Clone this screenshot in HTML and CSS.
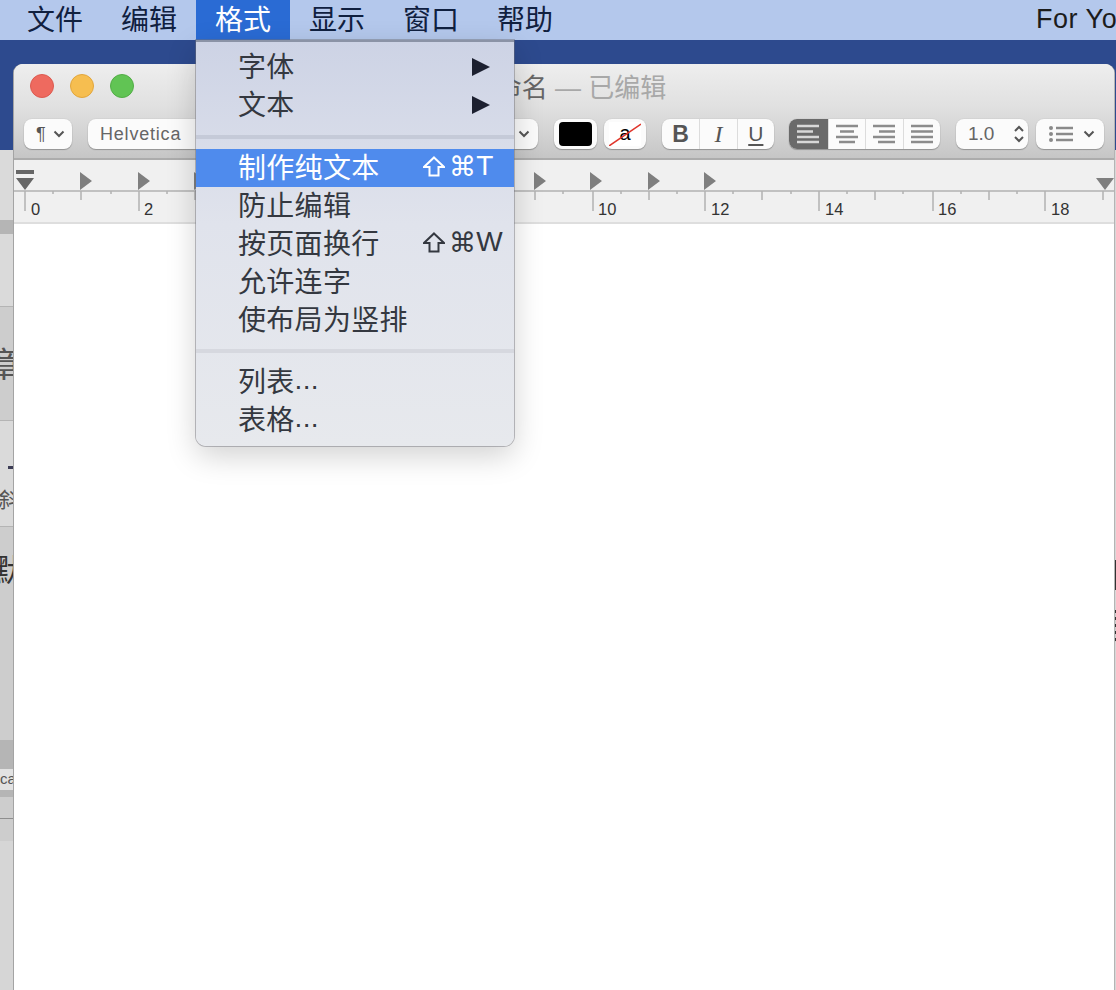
FILE: index.html

```html
<!DOCTYPE html>
<html lang="zh">
<head>
<meta charset="utf-8"/>
<title>未命名 — 已编辑</title>
<link rel="stylesheet" href="styles.css">
</head>
<body>
<div class="menubar">
  <div class="menubar-item">文件</div>
  <div class="menubar-item">编辑</div>
  <div class="menubar-item active">格式</div>
  <div class="menubar-item">显示</div>
  <div class="menubar-item">窗口</div>
  <div class="menubar-item">帮助</div>
  <div class="menubar-right">For You</div>
</div>

<div class="desktop">
  <!-- sliver of the window behind -->
  <div class="back-window">
    <div class="back-row h70 light"></div>
    <div class="back-row h14 dark"></div>
    <div class="back-row h72 light line"></div>
    <div class="back-row h114 mid line"><span class="glyph-zhang">章</span></div>
    <div class="back-row h106 light line"><span class="dot"></span><span class="dash"></span><span class="glyph-xie">斜</span></div>
    <div class="back-row h214 mid"><span class="glyph-mo">默</span></div>
    <div class="back-row h29 dark"></div>
    <div class="back-row h21 pale"><span class="glyph-ca">ca</span></div>
    <div class="back-row h7 dark"></div>
    <div class="back-row h22 mid line-dark"></div>
    <div class="back-row h22 mid"></div>
    <div class="back-row rest light"></div>
  </div>
  <div class="back-edge">
    <div class="edge-gap"></div>
    <div class="edge-dark"></div>
    <div class="edge-dashes"></div>
  </div>

  <div class="window">
    <div class="titlebar">
      <div class="lights">
        <span class="light-btn red"></span>
        <span class="light-btn yellow"></span>
        <span class="light-btn green"></span>
      </div>
      <div class="title">未命名 <span class="edited">— 已编辑</span></div>
    </div>

    <div class="toolbar">
      <div class="pill para">
        <span class="para-mark">¶</span>
        <svg class="chev" width="12" height="8" viewBox="0 0 12 8"><path d="M1.5 1.5 6 6l4.5-4.5"/></svg>
      </div>
      <div class="pill font-pick">
        <span>Helvetica</span>
        <svg class="chev" width="12" height="8" viewBox="0 0 12 8"><path d="M1.5 1.5 6 6l4.5-4.5"/></svg>
      </div>
      <div class="pill well"><span class="swatch"></span></div>
      <div class="pill well well-none">
        <span class="swatch-none">a
          <svg width="32" height="24" viewBox="0 0 32 24"><path d="M0 24 32 2"/></svg>
        </span>
      </div>
      <div class="pill seg bold-group">
        <span class="seg-btn b">B</span>
        <span class="seg-btn i">I</span>
        <span class="seg-btn u">U</span>
      </div>
      <div class="pill seg align-group">
        <span class="seg-btn on">
          <svg width="24" height="20" viewBox="0 0 24 20"><path d="M1 2h22M1 7.5h16M1 13h22M1 18h22"/></svg>
        </span>
        <span class="seg-btn">
          <svg width="24" height="20" viewBox="0 0 24 20"><path d="M1 2h22M5 7.5h14M1 13h22M4 18h16"/></svg>
        </span>
        <span class="seg-btn">
          <svg width="24" height="20" viewBox="0 0 24 20"><path d="M1 2h22M7 7.5h16M1 13h22M6 18h17"/></svg>
        </span>
        <span class="seg-btn">
          <svg width="24" height="20" viewBox="0 0 24 20"><path d="M1 2h22M1 7.5h22M1 13h22M1 18h22"/></svg>
        </span>
      </div>
      <div class="pill spacing">
        <span>1.0</span>
        <svg class="chev" width="12" height="18" viewBox="0 0 12 18"><path d="M2 6l4-4 4 4M2 12l4 4 4-4"/></svg>
      </div>
      <div class="pill list-pick">
        <svg class="list-icon" width="24" height="18" viewBox="0 0 24 18"><path d="M7 3h17M7 9h17M7 15h17"/><circle cx="2" cy="3" r="2"/><circle cx="2" cy="9" r="2"/><circle cx="2" cy="15" r="2"/></svg>
        <svg class="chev" width="12" height="8" viewBox="0 0 12 8"><path d="M1.5 1.5 6 6l4.5-4.5"/></svg>
      </div>
    </div>

    <svg class="ruler" width="1100" height="64" viewBox="14 160 1100 64">
      <path class="rule-line" d="M14 191h1100"/>
      <path class="rule-bottom" d="M14 223h1100"/>
      <path class="rule-tick" d="M25 191v20M139 191v20M593 191v20M705 191v20M819 191v20M933 191v20M1045 191v20
        M81 191v9M195 191v9M535 191v9M649 191v9M762 191v9M875 191v9M989 191v9M1103 191v9
        M53 191v3M111 191v3M167 191v3M563 191v3M621 191v3M677 191v3M733 191v3M791 191v3M847 191v3M903 191v3M961 191v3M1017 191v3"/>
      <path class="rule-mark" d="M80 172l12 9-12 9zM138 172l12 9-12 9zM194 172l12 9-12 9zM534 172l12 9-12 9zM590 172l12 9-12 9zM648 172l12 9-12 9zM704 172l12 9-12 9zM1096 178h18l-9 12z"/>
      <path class="rule-first" d="M16 170h18v4H16zM16 178h18l-9 12z"/>
      <text x="31" y="215">0</text>
      <text x="144" y="215">2</text>
      <text x="598" y="215">10</text>
      <text x="711" y="215">12</text>
      <text x="825" y="215">14</text>
      <text x="938" y="215">16</text>
      <text x="1051" y="215">18</text>
    </svg>

    <div class="doc"></div>
  </div>

  <div class="menu">
    <div class="menu-row">字体<span class="arrow"></span></div>
    <div class="menu-row">文本<span class="arrow"></span></div>
    <div class="menu-sep"></div>
    <div class="menu-row hot">
      <span class="menu-label">制作纯文本</span>
      <svg class="shift" width="22" height="21" viewBox="0 0 22 21"><path d="M11 1.5 21 11H15.5V19.5H6.5V11H1Z"/></svg>
      <span class="cmd">⌘</span><span class="key">T</span>
    </div>
    <div class="menu-row">防止编辑</div>
    <div class="menu-row">
      <span class="menu-label">按页面换行</span>
      <svg class="shift" width="22" height="21" viewBox="0 0 22 21"><path d="M11 1.5 21 11H15.5V19.5H6.5V11H1Z"/></svg>
      <span class="cmd">⌘</span><span class="key">W</span>
    </div>
    <div class="menu-row">允许连字</div>
    <div class="menu-row">使布局为竖排</div>
    <div class="menu-sep low"></div>
    <div class="menu-row">列表<span class="key">...</span></div>
    <div class="menu-row">表格<span class="key">...</span></div>
  </div>
</div>
</body>
</html>
```

FILE: styles.css

```css
* {
    box-sizing: border-box;
}
html, body {
    margin: 0;
    height: 990px;
    overflow: hidden;
}
body {
    width: 1116px;
    background: #2d4a8e;
    font-family: "Liberation Sans", "Noto Sans CJK SC", sans-serif;
}

/* menu bar */
.menubar {
    display: flex;
    height: 40px;
    padding-left: 8px;
    background: #b4c8ec;
    color: #10203f;
    font-size: 28px;
    line-height: 41px;
    white-space: nowrap;
    overflow: hidden;
}
.menubar-item {
    padding: 0 19px;
}
.menubar-item.active {
    background: #2a6bd4;
    color: #fff;
}
.menubar-right {
    margin-left: 464px;
    font-size: 27px;
    letter-spacing: 0.5px;
    line-height: 38px;
    color: #1c1c1c;
}

.desktop {
    position: relative;
    height: 950px;
}

/* window behind, only a sliver shows */
.back-window {
    position: absolute;
    left: 0;
    top: 110px;
    bottom: 0;
    width: 14px;
    display: flex;
    flex-direction: column;
    overflow: hidden;
    color: #555;
}
.back-row {
    position: relative;
    flex: none;
    overflow: hidden;
    white-space: nowrap;
}
.back-row.light { background: #dadada; }
.back-row.mid { background: #cdcdcd; }
.back-row.dark { background: #b5b5b5; }
.back-row.pale { background: #e2e2e2; }
.back-row.line { border-bottom: 1px solid #b4b4b4; }
.back-row.line-dark { border-bottom: 1px solid #8e8e8e; }
.back-row.rest { flex: 1; background: #d6d6d6; }
.h7 { height: 7px; }
.h14 { height: 14px; }
.h21 { height: 21px; }
.h22 { height: 22px; }
.h29 { height: 29px; }
.h70 { height: 70px; }
.h72 { height: 73px; }
.h106 { height: 106px; }
.h114 { height: 114px; }
.h214 { height: 213px; }
.glyph-zhang {
    position: absolute;
    left: -13px;
    top: 41px;
    font-size: 34px;
    line-height: 34px;
}
.glyph-xie {
    position: absolute;
    left: -2px;
    top: 66px;
    font-size: 21px;
    line-height: 26px;
}
.glyph-mo {
    position: absolute;
    left: -8px;
    top: 25px;
    font-size: 31px;
    line-height: 38px;
    color: #333;
}
.glyph-ca {
    position: absolute;
    left: 0;
    top: 1px;
    font-size: 15px;
    line-height: 18px;
}
.dot {
    position: absolute;
    left: 13px;
    top: 19px;
    width: 1px;
    height: 2px;
    background: #445;
}
.dash {
    position: absolute;
    left: 8px;
    top: 45px;
    width: 6px;
    height: 3px;
    background: #3c3c55;
}
.back-edge {
    position: absolute;
    right: 0;
    top: 110px;
    bottom: 0;
    width: 2px;
    background: #d8d8d8;
}
.edge-gap { height: 410px; }
.edge-dark { height: 30px; background: #333; }
.edge-dashes {
    height: 32px;
    margin-top: 20px;
    background: repeating-linear-gradient(#333 0 3px, #ccc 3px 7px);
}

/* TextEdit window */
.window {
    position: absolute;
    left: 14px;
    top: 24px;
    right: 2px;
    bottom: 0;
    display: flex;
    flex-direction: column;
    background: #fff;
    border-radius: 9px 9px 0 0;
    overflow: hidden;
    box-shadow: -1px 0 0 #a4a4a4, 1px 0 0 #b4b4b4;
}
.titlebar {
    display: grid;
    grid-template-columns: 1fr auto 1fr;
    align-items: center;
    height: 44px;
    background: linear-gradient(#eeeeee, #e0e0e0);
}
.lights {
    display: flex;
    gap: 16px;
    padding-left: 16px;
}
.light-btn {
    width: 24px;
    height: 24px;
    border-radius: 50%;
}
.light-btn.red { background: #ee6a5f; border: 1px solid #dc5a50; }
.light-btn.yellow { background: #f6be50; border: 1px solid #e2a63c; }
.light-btn.green { background: #61c454; border: 1px solid #52ad46; }
.title {
    margin-left: 8px;
    padding-top: 4px;
    font-size: 26px;
    line-height: 34px;
    color: #666;
    white-space: nowrap;
}
.edited {
    color: #a8a8a8;
}

.toolbar {
    display: flex;
    height: 52px;
    padding: 11px 0 0 10px;
    background: linear-gradient(#e0e0e0, #c6c6c6);
    border-bottom: 2px solid #acacac;
}
.pill {
    display: flex;
    align-items: center;
    height: 30px;
    background: #fbfbfb;
    border-radius: 8px;
    box-shadow: 0 1px 1px rgba(0, 0, 0, 0.25), 0 0 0 1px rgba(0, 0, 0, 0.03);
    color: #666;
    flex: none;
}
.chev {
    fill: none;
    stroke: #555;
    stroke-width: 2;
    flex: none;
}
.para {
    width: 48px;
    padding-left: 12px;
    gap: 5px;
    font-size: 18px;
}
.para-mark {
    width: 12px;
    color: #555;
}
.font-pick {
    width: 450px;
    margin-left: 16px;
    padding: 0 8px 0 12px;
    justify-content: space-between;
    font-size: 18px;
    letter-spacing: 0.8px;
}
.well {
    width: 43px;
    margin-left: 16px;
    justify-content: center;
}
.well-none {
    width: 42px;
    margin-left: 7px;
}
.swatch {
    width: 33px;
    height: 24px;
    background: #000;
    border-radius: 4px;
}
.swatch-none {
    position: relative;
    width: 32px;
    height: 24px;
    background: #fff;
    color: #000;
    font-size: 20px;
    line-height: 22px;
    text-align: center;
}
.swatch-none svg {
    position: absolute;
    left: 0;
    top: 0;
    fill: none;
    stroke: #e0352b;
    stroke-width: 1.5;
}
.seg {
    overflow: hidden;
}
.seg-btn {
    display: flex;
    align-items: center;
    justify-content: center;
    height: 30px;
    border-left: 1px solid #dcdcdc;
}
.seg-btn:first-child {
    border-left: none;
}
.seg-btn svg {
    fill: none;
    stroke: #8c8c8c;
    stroke-width: 2.4;
}
.bold-group {
    width: 112px;
    margin-left: 16px;
}
.bold-group .seg-btn {
    width: 37.5px;
    color: #555;
}
.b {
    font-size: 23px;
    font-weight: 700;
}
.i {
    font-family: "Liberation Serif", serif;
    font-style: italic;
    font-size: 24px;
}
.u {
    font-size: 21px;
    text-decoration: underline;
    text-underline-offset: 3px;
}
.align-group {
    width: 151px;
    margin-left: 15px;
}
.align-group .seg-btn {
    width: 37.5px;
}
.align-group .seg-btn.on {
    width: 39px;
    background: #6a6a6a;
}
.align-group .seg-btn.on svg {
    stroke: #d8d8d8;
}
.spacing {
    width: 72px;
    margin-left: 16px;
    padding-left: 12px;
    gap: 19px;
    font-size: 19px;
}
.list-pick {
    width: 68px;
    margin-left: 8px;
    padding-left: 13px;
    gap: 10px;
}
.list-icon {
    fill: #8a8a8a;
    stroke: #8a8a8a;
    stroke-width: 2.4;
    flex: none;
}
.list-icon circle {
    stroke: none;
}

.ruler {
    flex: none;
    display: block;
    background: #f0f0f0;
}
.ruler text {
    font-size: 16.5px;
    fill: #333;
}
.rule-line, .rule-tick {
    fill: none;
    stroke: #b2b2b2;
    stroke-width: 1.5;
}
.rule-bottom {
    fill: none;
    stroke: #dedede;
    stroke-width: 2;
}
.rule-mark {
    fill: #7f7f7f;
}
.rule-first {
    fill: #666;
}
.doc {
    flex: 1;
    background: #fff;
}

/* open Format menu */
.menu {
    position: absolute;
    left: 196px;
    top: 0;
    width: 318px;
    height: 406px;
    padding-top: 6px;
    background: linear-gradient(#cdd3e5, #e0e3ec 45%, #e7e9ed);
    border-top: 2px solid #8b93a6;
    border-radius: 0 0 10px 10px;
    box-shadow: 0 0 0 1px rgba(110, 110, 120, 0.45), 0 10px 30px rgba(0, 0, 0, 0.18);
    color: #343840;
    font-size: 28px;
    letter-spacing: 0.3px;
}
.menu-row {
    display: flex;
    align-items: center;
    height: 38px;
    padding: 0 0 4px 42px;
    white-space: nowrap;
}
.menu-row.hot {
    background: #4f8bed;
    color: #fff;
}
.menu-label {
    flex: 0 0 185px;
}
.arrow {
    margin: 4px 24px 0 auto;
    width: 0;
    height: 0;
    border-left: 18px solid #1c2030;
    border-top: 9.5px solid transparent;
    border-bottom: 9.5px solid transparent;
}
.menu-sep {
    height: 4px;
    margin: 11px 0 10px;
    background: #c5cad8;
}
.menu-sep.low {
    margin: 10px 0;
    background: #d6d8df;
}
.shift {
    flex: none;
    fill: none;
    stroke: currentColor;
    stroke-width: 2;
}
.cmd {
    margin-left: 4px;
    font-family: "DejaVu Sans", sans-serif;
    font-size: 27px;
}
.key {
    font-family: "Liberation Sans", sans-serif;
}
```
